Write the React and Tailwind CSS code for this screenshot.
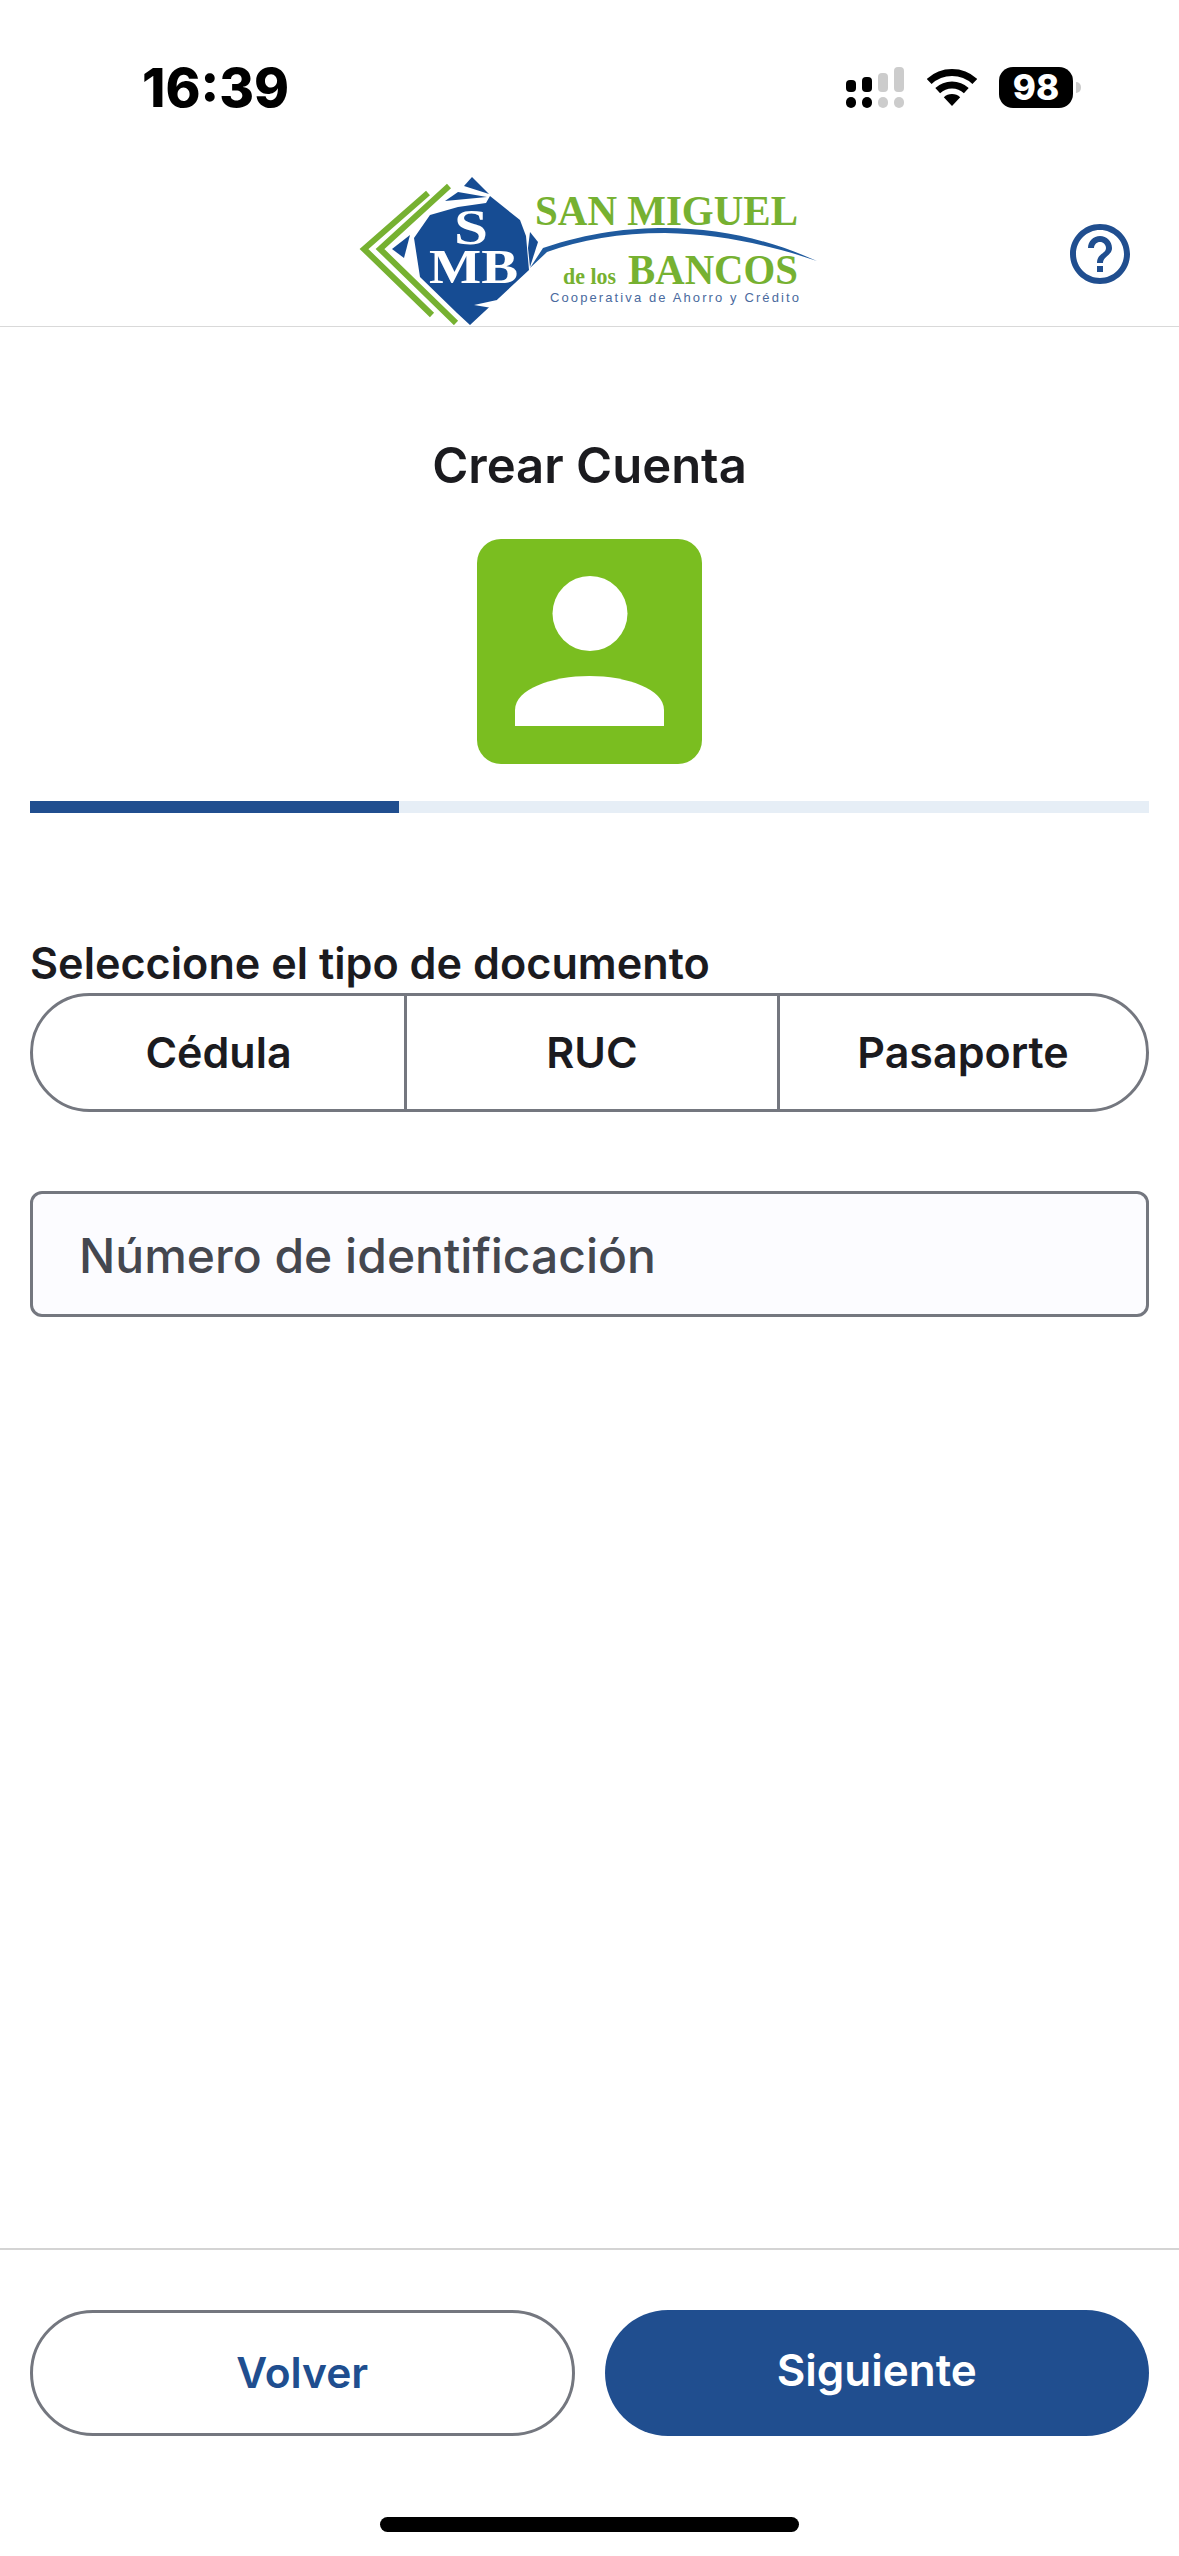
import React from 'react';

function Cellular() {
  return (
    <svg width="58" height="41" viewBox="0 0 58 41" fill="#000">
      <rect x="0" y="13" width="10" height="12" rx="4" />
      <rect x="16" y="10" width="10" height="15" rx="4" />
      <rect x="32" y="6" width="10" height="19" rx="4" fill="#cccccc" />
      <rect x="48" y="0" width="10" height="25" rx="4" fill="#cccccc" />
      <rect x="0" y="30" width="10" height="11" rx="5" />
      <rect x="16" y="30" width="10" height="11" rx="5" />
      <rect x="32" y="30" width="10" height="11" rx="5" fill="#cccccc" />
      <rect x="48" y="30" width="10" height="11" rx="5" fill="#cccccc" />
    </svg>
  );
}

function Wifi() {
  return (
    <svg width="50" height="37" viewBox="0 0 50 37" fill="none">
      <path d="M2.2 12.5A33.5 33.5 0 0 1 47.8 12.5" stroke="#000" strokeWidth="7" />
      <path d="M10.7 21.6A21 21 0 0 1 39.3 21.6" stroke="#000" strokeWidth="7" />
      <path d="M16.8 28.2A12 12 0 0 1 33.2 28.2L25 37Z" fill="#000" />
    </svg>
  );
}

function Logo() {
  return (
    <svg width="500" height="165" viewBox="340 160 500 165">
      {/* chevrons */}
      <path d="M428 193L364 249L432 315" fill="none" stroke="#76b131" strokeWidth="6" />
      <path d="M449 186L380 249L456 323" fill="none" stroke="#76b131" strokeWidth="6" />
      {/* diamond */}
      <path
        d="M490 196L520 220L526 236L529 270L470 325L457 313L420 277L414 238L430 215L458 207L486 203Z"
        fill="#164c93"
      />
      <path d="M472 177L489 194L464 186Z" fill="#164c93" />
      <path d="M445 201L458 192L487 197Z" fill="#164c93" />
      <path d="M392 249L410 235L404 258Z" fill="#164c93" />
      <path d="M530 232L538 242L530 267L528 248Z" fill="#164c93" />
      <path d="M474 305L497 300L492 308Z" fill="#ffffff" />
      {/* swoosh */}
      <path
        d="M530 268L543 248C590 232 630 228 665 228C720 228 770 240 817 261C770 245 720 234 665 233C620 233 580 240 547 252Z"
        fill="#1f5a9e"
      />
      {/* lettering */}
      <g fontFamily="'Liberation Serif', serif" fontWeight="700">
        <text x="454" y="244" fontSize="50" fill="#ffffff" textLength="34" lengthAdjust="spacingAndGlyphs">S</text>
        <text x="429" y="283" fontSize="48" fill="#ffffff" textLength="89" lengthAdjust="spacingAndGlyphs">MB</text>
        <text x="535" y="225" fontSize="43" fill="#76b131" textLength="263" lengthAdjust="spacingAndGlyphs">SAN MIGUEL</text>
        <text x="563" y="284" fontSize="24" fill="#76b131" textLength="53" lengthAdjust="spacingAndGlyphs">de los</text>
        <text x="628" y="284" fontSize="42" fill="#76b131" textLength="170" lengthAdjust="spacingAndGlyphs">BANCOS</text>
      </g>
      <text x="550" y="302" fontFamily="'Liberation Sans', sans-serif" fontSize="13" fill="#4a6a9e" textLength="249">
        Cooperativa de Ahorro y Crédito
      </text>
    </svg>
  );
}

export default function App() {
  return (
    <div className="flex h-[2556px] w-[1179px] flex-col overflow-hidden bg-white font-[Inter,sans-serif] text-[#1b1b1f]">
      {/* status bar */}
      <div className="flex h-[160px] items-start justify-between pl-[142px] pr-[98px] pt-[57px]">
        <span className="text-[53px] font-extrabold leading-[62px] text-black">16:39</span>
        <div className="mt-[10px] flex items-center">
          <Cellular />
          <div className="ml-[23px] mr-[22px]">
            <Wifi />
          </div>
          <div className="flex h-[41px] w-[74px] items-center justify-center rounded-[14px] bg-black text-[35px] font-extrabold leading-none text-white">
            98
          </div>
          <div className="ml-[3px] h-[11px] w-[5px] rounded-r-full bg-[#cccccc]" />
        </div>
      </div>

      {/* header */}
      <header className="grid h-[167px] grid-cols-[1fr_500px_1fr] border-b border-[#d9d9d9]">
        <div />
        <Logo />
        <div className="flex items-center justify-end pr-[43px] pt-[22px]">
          <svg width="72" height="72" viewBox="0 0 24 24" fill="#204e8f">
            <path d="M11 18h2v-2h-2v2zm1-16C6.48 2 2 6.48 2 12s4.48 10 10 10 10-4.48 10-10S17.52 2 12 2zm0 18c-4.41 0-8-3.59-8-8s3.59-8 8-8 8 3.59 8 8-3.59 8-8 8zm0-14c-2.21 0-4 1.79-4 4h2c0-1.1.9-2 2-2s2 .9 2 2c0 2-3 1.75-3 5h2c0-2.25 3-2.5 3-5 0-2.21-1.79-4-4-4z" />
          </svg>
        </div>
      </header>

      <main className="flex flex-1 flex-col px-[30px] pt-[110px]">
        <h1 className="text-center text-[49px] font-semibold leading-[58px]">Crear Cuenta</h1>
        <div className="mx-auto mt-[44px] h-[225px] w-[225px] rounded-[24px] bg-[#7abe20]">
          <svg width="225" height="225" viewBox="0 0 225 225" fill="#ffffff">
            <circle cx="113" cy="74.5" r="37.5" />
            <path d="M38 187V171C38 150 75 137 112.5 137C150 137 187 150 187 171V187Z" />
          </svg>
        </div>

        <div className="mt-[37px] h-[12px] bg-[#e6eef6]">
          <div className="h-full w-[369px] bg-[#204e8f]" />
        </div>

        <p className="mt-[125px] text-[43.2px] font-semibold leading-[50px]">Seleccione el tipo de documento</p>
        <div className="mt-[5px] grid h-[119px] grid-cols-[371px_373px_1fr] overflow-hidden rounded-full border-[3px] border-[#74777f] text-[43px] font-semibold">
          <button className="flex items-center justify-center">Cédula</button>
          <button className="flex items-center justify-center border-l-[3px] border-[#74777f]">RUC</button>
          <button className="flex items-center justify-center border-l-[3px] border-[#74777f]">Pasaporte</button>
        </div>

        <div className="mt-[79px] flex h-[126px] items-center rounded-[12px] border-[3px] border-[#74777f] bg-[#fcfcff] pl-[46px] pt-[3px] text-[48px] font-medium text-[#44474f]">
          Número de identificación
        </div>
      </main>

      {/* footer */}
      <footer className="flex flex-col border-t-2 border-[#d4d4d4] px-[30px] pt-[60px]">
        <div className="grid grid-cols-2 gap-[30px]">
          <button className="h-[126px] rounded-full border-[3px] border-[#74777f] text-[42.5px] font-semibold text-[#204e8f]">
            Volver
          </button>
          <button className="h-[126px] rounded-full bg-[#204e8f] pb-[6px] text-[44px] font-semibold text-white">
            Siguiente
          </button>
        </div>
        <div className="mx-auto mb-[24px] mt-[81px] h-[15px] w-[419px] rounded-full bg-black" />
      </footer>
    </div>
  );
}
